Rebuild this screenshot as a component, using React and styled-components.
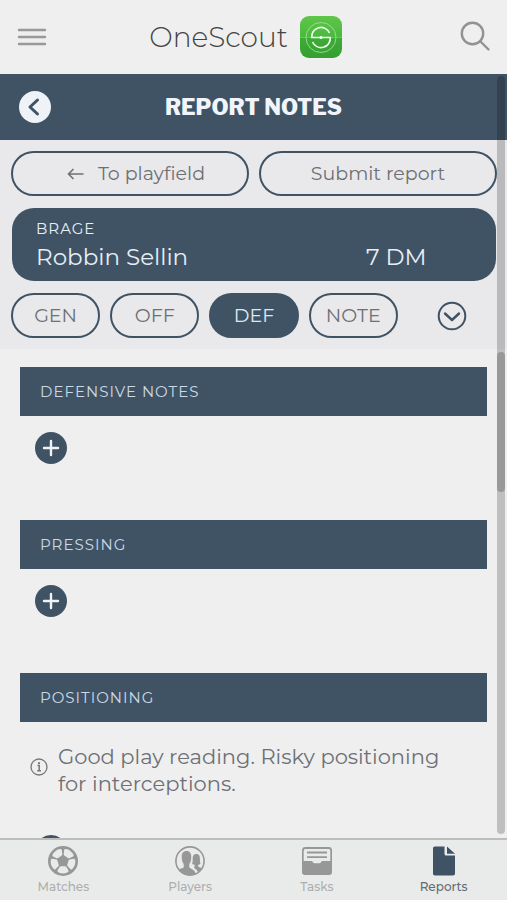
import React from 'react'
import styled, { createGlobalStyle, css } from 'styled-components'

const GlobalStyle = createGlobalStyle`
  * {
    box-sizing: border-box;
  }

  body {
    margin: 0;
    background: #efefef;
    color: #6d7075;
    font-family: Montserrat, Inter, 'Open Sans', sans-serif;
  }

  button {
    font: inherit;
    color: inherit;
    padding: 0;
    border: 0;
    background: none;
    cursor: pointer;
  }

  svg {
    display: block;
    flex: none;
  }
`

const Screen = styled.div`
  display: flex;
  flex-direction: column;
  height: 100vh;
`

const Header = styled.header`
  display: grid;
  grid-template-columns: 48px 1fr 48px;
  align-items: center;
  flex: none;
  height: 74px;
  padding: 0 8px;
`

const IconButton = styled.button`
  display: flex;
  align-items: center;
  justify-content: center;
  height: 48px;
`

const Brand = styled.a`
  display: flex;
  align-items: center;
  justify-content: center;
  gap: 12px;
  padding-right: 16px;
  color: #444;
  font-size: 28px;
  font-weight: 300;
  text-decoration: none;
`

const Body = styled.div`
  position: relative;
  flex: 1;
  min-height: 0;
`

const Scroller = styled.main`
  height: 100%;
  overflow-y: auto;
  scrollbar-width: none;
`

const ScrollTrack = styled.div`
  position: absolute;
  top: 2px;
  right: 2px;
  bottom: 4px;
  width: 8px;
  border-radius: 4px;
  background: rgba(0, 0, 0, 0.2);
  pointer-events: none;
`

const ScrollThumb = styled.div`
  position: absolute;
  top: 276px;
  width: 100%;
  height: 140px;
  border-radius: 4px;
  background: rgba(0, 0, 0, 0.2);
`

const TitleBar = styled.div`
  display: grid;
  grid-template-columns: 32px 1fr 32px;
  align-items: center;
  height: 66px;
  padding: 0 19px;
  background: #405364;
`

const BackButton = styled.button`
  display: flex;
  align-items: center;
  justify-content: center;
  width: 32px;
  height: 32px;
  border-radius: 50%;
  background: #eff2f6;
  color: #405364;
`

const Title = styled.h1`
  margin: 0;
  color: #f1f5fb;
  font-family: 'Libre Franklin', 'Open Sans', sans-serif;
  font-size: 22px;
  font-weight: 800;
  text-align: center;
`

const Panel = styled.div`
  display: flex;
  flex-direction: column;
  gap: 12px;
  padding: 11px 10px 11px 11px;
  background: #e9e9eb;
`

const Row = styled.div`
  display: grid;
  grid-template-columns: repeat(${({ $cols }) => $cols}, 1fr);
  gap: 10px;
`

const Pill = styled.button`
  display: flex;
  align-items: center;
  justify-content: center;
  gap: 14px;
  height: 45px;
  border: 2px solid #405364;
  border-radius: 23px;
  font-size: 19px;

  svg {
    margin-left: 12px;
  }

  ${({ $active }) => $active && css`
    background: #405364;
    color: #dde8f3;
  `}
`

const PlayerCard = styled.div`
  display: grid;
  grid-template-columns: 1fr 130px;
  height: 73px;
  margin: 0 1px;
  padding: 8px 0 8px 24px;
  border-radius: 22px;
  background: #405364;
  color: #e6eef7;
  font-size: 23px;
  line-height: 32px;
`

const Team = styled.div`
  grid-column: 1 / -1;
  font-size: 15px;
  line-height: 25px;
  letter-spacing: 1px;
`

const More = styled.button`
  display: flex;
  align-items: center;
  justify-content: center;
  color: #405364;
`

const Sections = styled.div`
  padding: 18px 20px;
`

const Section = styled.section`
  padding-bottom: 56px;
`

const SectionTitle = styled.h2`
  margin: 0;
  padding: 0 20px;
  background: #405364;
  color: #cbd9e6;
  font-size: 15px;
  font-weight: 400;
  line-height: 49px;
  letter-spacing: 1px;
`

const Note = styled.div`
  display: flex;
  align-items: center;
  gap: 10px;
  padding: 21px 40px 22px 10px;

  svg {
    margin-bottom: 7px;
  }
`

const NoteText = styled.p`
  margin: 0;
  font-size: 21px;
  line-height: 27px;
`

const AddButton = styled.button`
  display: flex;
  align-items: center;
  justify-content: center;
  width: 32px;
  height: 32px;
  margin: 16px 0 0 15px;
  border-radius: 50%;
  background: #405364;
  color: #eff3f7;
`

const TabBar = styled.nav`
  display: grid;
  grid-template-columns: repeat(4, 1fr);
  flex: none;
  height: 62px;
  border-top: 2px solid #bdbdbd;
  background: #e9ebea;
`

const Tab = styled.a`
  display: flex;
  flex-direction: column;
  align-items: center;
  gap: 2px;
  padding-top: 6px;
  color: ${({ $active }) => ($active ? '#5f6d79' : '#adafae')};
  font-size: 12px;
  font-weight: 500;
  line-height: 18px;
  text-decoration: none;

  svg {
    color: ${({ $active }) => ($active ? '#405364' : '#979797')};
  }
`

const MenuIcon = () => (
  <svg width='30' height='20' viewBox='0 0 30 20' stroke='#999' strokeWidth='2.4' strokeLinecap='round'>
    <path d='M2 3h26M2 10h26M2 17h26' />
  </svg>
)

const SearchIcon = () => (
  <svg width='32' height='32' viewBox='0 0 32 32' fill='none' stroke='#929292' strokeWidth='2.4' strokeLinecap='round'>
    <circle cx='13.5' cy='12.5' r='10.7' />
    <path d='M21.5 20.5l8 8' />
  </svg>
)

const Logo = () => (
  <svg width='42' height='42' viewBox='0 0 42 42' fill='none'>
    <defs>
      <linearGradient id='logo' x2='0' y2='1'>
        <stop offset='0' stopColor='#5fc64a' />
        <stop offset='0.5' stopColor='#4ab93d' />
        <stop offset='0.52' stopColor='#3dac36' />
        <stop offset='1' stopColor='#359f30' />
      </linearGradient>
    </defs>
    <rect width='42' height='42' rx='9' fill='url(#logo)' />
    <path d='M0 21.5h42' stroke='#8edb7b' strokeWidth='0.5' />
    <circle cx='21' cy='21.5' r='15' stroke='#9bdf8d' strokeWidth='0.9' />
    <g stroke='#f2fff0' strokeWidth='1.6'>
      <path d='M29.5 17A9.3 9.3 0 0 0 11.7 21.5h18.6A9.3 9.3 0 0 1 12.500 26' />
    </g>
    <circle cx='21' cy='21.5' r='1.5' fill='#f2fff0' />
  </svg>
)

const BackIcon = () => (
  <svg width='32' height='32' viewBox='0 0 32 32' fill='none' stroke='currentColor' strokeWidth='3' strokeLinecap='round' strokeLinejoin='round'>
    <path d='M18.5 9l-7.5 7 7.5 7' />
  </svg>
)

const ArrowIcon = () => (
  <svg width='17' height='14' viewBox='0 0 17 14' fill='none' stroke='currentColor' strokeWidth='1.6'>
    <path d='M16.5 7H1.500M6.500 2L1.500 7l5 5' />
  </svg>
)

const DownIcon = () => (
  <svg width='30' height='30' viewBox='0 0 30 30' fill='none' stroke='currentColor' strokeWidth='2' strokeLinecap='round' strokeLinejoin='round'>
    <circle cx='15' cy='15' r='13.3' />
    <path d='M8 12.5l7 6.5 7-6.5' strokeWidth='2.4' />
  </svg>
)

const PlusIcon = () => (
  <svg width='32' height='32' viewBox='0 0 32 32' stroke='currentColor' strokeWidth='2.4' strokeLinecap='round'>
    <path d='M16 9v14M9 16h14' />
  </svg>
)

const InfoIcon = () => (
  <svg width='18' height='18' viewBox='0 0 18 18' fill='none' stroke='#777' strokeWidth='1.3'>
    <circle cx='9' cy='9' r='8' />
    <path d='M7.500 7.600h1.700v5M7.200 12.700h3.800' strokeWidth='1.500' />
    <circle cx='9' cy='5.200' r='1.100' fill='#777' stroke='none' />
  </svg>
)

const BallIcon = () => (
  <svg width='30' height='30' viewBox='0 0 30 30'>
    <circle cx='15' cy='15' r='15' fill='currentColor' />
    <g fill='#e9ebea'>
      {[36, 108, 180, 252, 324].map((angle) => (
        <path
          key={angle}
          transform={`rotate(${angle} 15 15)`}
          d='M12.800 9.800h4.400q.8 0 1.200-.7l1.900-3.200q.8-1.400-.6-2.200Q17.600 2.500 15 2.500T10.300 3.700q-1.400.8-.6 2.200l1.900 3.200q.4.700 1.200.7z'
        />
      ))}
    </g>
  </svg>
)

const PlayersIcon = () => (
  <svg width='30' height='30' viewBox='0 0 30 30'>
    <defs>
      <clipPath id='players'>
        <circle cx='15' cy='15' r='14.5' />
      </clipPath>
    </defs>
    <g fill='currentColor' clipPath='url(#players)'>
      <path d='M11.500 5C15 5 16.500 7.500 16.200 11.500C16.200 14.500 15.500 16.500 14.300 18V21.500C16 23 20.500 23.500 21.500 30H1V24.500C4 22.500 7 23 8.700 21.500V18C7.500 16.500 6.800 14.500 6.800 11.500C6.500 7.500 8 5 11.500 5Z' />
      <path d='M21.300 8C24.300 8 25 10.500 24.900 13C24.900 15.500 25.200 16.500 25.500 18C24.700 18.600 23.800 18.700 23.200 18.700V20.500C25 21.700 26.500 21.700 28.500 23.500L24 28.500C23 25.500 22 23.500 19 22L19.600 20.500V18.700C18.800 18.700 17.900 18.600 17.100 18C17.500 16.500 17.800 15.500 17.700 13C17.600 10.500 18.300 8 21.300 8Z' />
    </g>
    <circle cx='15' cy='15' r='14.1' fill='none' stroke='currentColor' strokeWidth='1.6' />
  </svg>
)

const TasksIcon = () => (
  <svg width='30' height='30' viewBox='0 0 30 30'>
    <rect x='0.800' y='2' width='28.400' height='26' rx='2.500' fill='none' stroke='currentColor' strokeWidth='1.800' />
    <path d='M0 15h9.500c.8 0 1 .5 1.300 1 .4.800.8 1.200 1.700 1.200h5c.9 0 1.300-.4 1.700-1.200.3-.5.5-1 1.300-1H30V26c0 1.800-1 2.800-2.800 2.800H2.800C1 28.800 0 27.800 0 26z' fill='currentColor' />
    <path d='M5 6.500h20M5 11.200h20' stroke='currentColor' strokeWidth='1.800' />
  </svg>
)

const ReportIcon = () => (
  <svg width='30' height='30' viewBox='0 0 30 30' fill='currentColor'>
    <path d='M6 .5h9.500v7.300c0 1.200.6 1.800 1.800 1.800H26v18c0 1.300-.7 2-2 2H6c-1.300 0-2-.7-2-2V2.500c0-1.300.7-2 2-2z' />
    <path d='M18 .5l8 7.300h-8z' />
  </svg>
)

const filters = ['GEN', 'OFF', 'DEF', 'NOTE']

const sections = [
  { title: 'DEFENSIVE NOTES' },
  { title: 'PRESSING' },
  { title: 'POSITIONING', note: 'Good play reading. Risky positioning for interceptions.' },
]

const tabs = [
  { label: 'Matches', Icon: BallIcon },
  { label: 'Players', Icon: PlayersIcon },
  { label: 'Tasks', Icon: TasksIcon },
  { label: 'Reports', Icon: ReportIcon },
]

export default function App() {
  const [filter, setFilter] = React.useState('DEF')

  return (
    <Screen>
      <GlobalStyle />
      <Header>
        <IconButton aria-label='Menu'><MenuIcon /></IconButton>
        <Brand href='#'>
          OneScout
          <Logo />
        </Brand>
        <IconButton aria-label='Search'><SearchIcon /></IconButton>
      </Header>
      <Body>
        <Scroller>
          <TitleBar>
            <BackButton aria-label='Back'><BackIcon /></BackButton>
            <Title>REPORT NOTES</Title>
          </TitleBar>
          <Panel>
            <Row $cols={2}>
              <Pill><ArrowIcon />To playfield</Pill>
              <Pill>Submit report</Pill>
            </Row>
            <PlayerCard>
              <Team>BRAGE</Team>
              <span>Robbin Sellin</span>
              <span>7 DM</span>
            </PlayerCard>
            <Row $cols={5}>
              {filters.map((name) => (
                <Pill key={name} $active={name === filter} onClick={() => setFilter(name)}>{name}</Pill>
              ))}
              <More aria-label='More'><DownIcon /></More>
            </Row>
          </Panel>
          <Sections>
            {sections.map(({ title, note }) => (
              <Section key={title}>
                <SectionTitle>{title}</SectionTitle>
                {note && (
                  <Note>
                    <InfoIcon />
                    <NoteText>{note}</NoteText>
                  </Note>
                )}
                <AddButton aria-label='Add note'><PlusIcon /></AddButton>
              </Section>
            ))}
          </Sections>
        </Scroller>
        <ScrollTrack>
          <ScrollThumb />
        </ScrollTrack>
      </Body>
      <TabBar>
        {tabs.map(({ label, Icon }) => (
          <Tab key={label} href='#' $active={label === 'Reports'}>
            <Icon />
            {label}
          </Tab>
        ))}
      </TabBar>
    </Screen>
  )
}
